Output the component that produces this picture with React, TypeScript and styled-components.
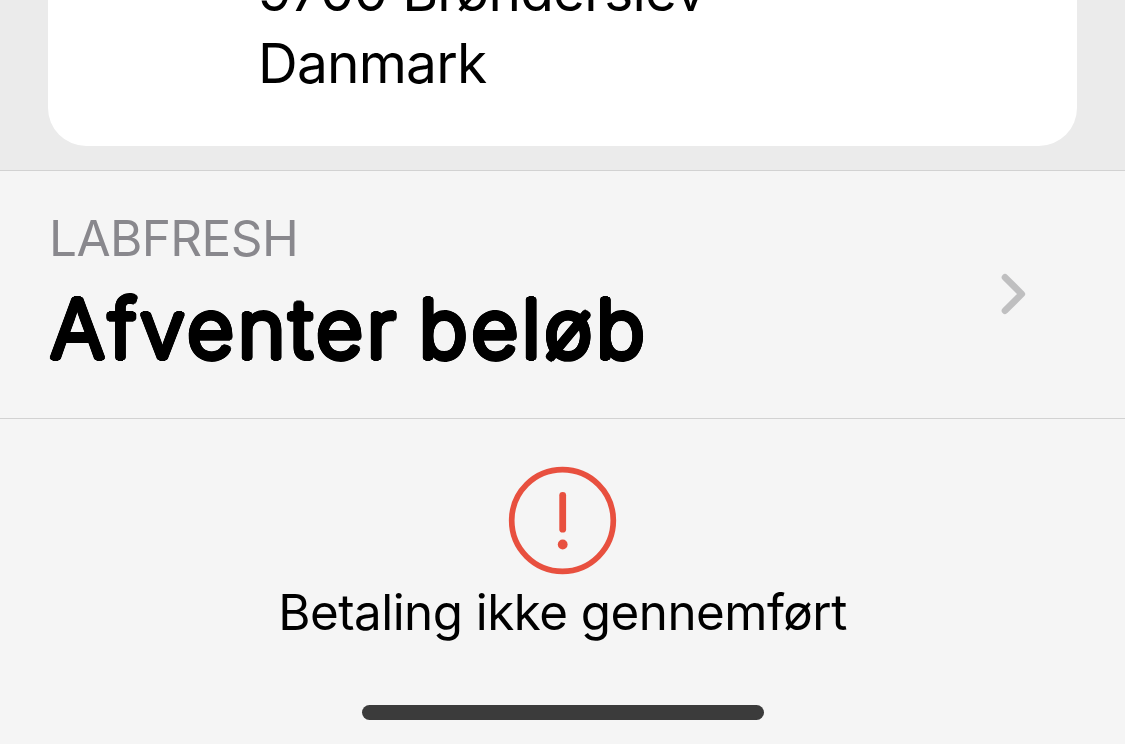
import React from 'react';
import styled, { createGlobalStyle } from 'styled-components';

const GlobalStyle = createGlobalStyle`
  * { box-sizing: border-box; }
  body { margin: 0; overflow: hidden; font-family: Inter, "Liberation Sans", sans-serif; color: #000; }
`;

const Screen = styled.main`
  width: 1125px;
  height: 744px;
  display: flex;
  flex-direction: column;
  overflow: hidden;
  background: #f5f5f5;
`;

const Backdrop = styled.div`
  flex: none;
  height: 170px;
  padding: 0 48px;
  background: #ebebeb;
`;

const AddressCard = styled.div`
  height: 146px;
  padding-left: 210px;
  display: flex;
  flex-direction: column;
  justify-content: flex-end;
  padding-bottom: 47px;
  overflow: hidden;
  border-radius: 0 0 38px 38px;
  background: #fff;
`;

const Line = styled.span<{ $size: number; $height: number; $tracking?: number; $weight?: number; $color?: string }>`
  flex: none;
  align-self: flex-start;
  white-space: nowrap;
  font-size: ${(p) => p.$size}px;
  line-height: ${(p) => p.$height}px;
  letter-spacing: ${(p) => p.$tracking ?? 0}px;
  font-weight: ${(p) => p.$weight ?? 400};
  color: ${(p) => p.$color ?? '#000'};
`;

// A ring of solid shadows thickens the strokes evenly, giving rounded terminals.
const roundedOutline = Array.from({ length: 16 }, (_, i) => {
  const angle = (i * Math.PI) / 8;
  return `${(2.6 * Math.cos(angle)).toFixed(2)}px ${(2.6 * Math.sin(angle)).toFixed(2)}px 0 #000`;
}).join(', ');

const RoundedTitle = styled(Line)`
  margin-left: 1px;
  word-spacing: -7px;
  text-shadow: ${roundedOutline};
`;

const PayeeRow = styled.section`
  flex: none;
  height: 249px;
  padding: 37px 98px 0 49px;
  display: flex;
  justify-content: space-between;
  border-top: 1px solid #d2d2d2;
  border-bottom: 1px solid #d2d2d2;
`;

const PayeeText = styled.div`
  display: flex;
  flex-direction: column;
`;

const Chevron = styled.svg`
  flex: none;
  width: 28px;
  height: 44px;
  margin-top: 64px;
`;

const Status = styled.section`
  flex: 1;
  display: flex;
  flex-direction: column;
  align-items: center;
  padding-top: 46px;
`;

const AlertIcon = styled.svg`
  flex: none;
  width: 111px;
  height: 110px;
`;

const StatusText = styled(Line)`
  align-self: center;
  margin-top: 7px;
`;

const HomeIndicator = styled.div`
  width: 402px;
  height: 15px;
  margin: auto 0 24px;
  border-radius: 8px;
  background: #3b3b3b;
`;

export default function App() {
  return (
    <>
      <GlobalStyle />
      <Screen>
        <Backdrop>
          <AddressCard>
            <Line $size={55} $height={72} $tracking={-0.8}>9700 Brønderslev</Line>
            <Line $size={55} $height={72} $tracking={-0.8}>Danmark</Line>
          </AddressCard>
        </Backdrop>
        <PayeeRow>
          <PayeeText>
            <Line $size={49.5} $height={60} $tracking={-0.6} $color="#89888d">LABFRESH</Line>
            <RoundedTitle $size={81.5} $height={122} $tracking={3.4} $weight={300}>Afventer beløb</RoundedTitle>
          </PayeeText>
          <Chevron viewBox="0 0 28 44" fill="none" stroke="#bfbfc0" strokeWidth="6.6" strokeLinecap="round" strokeLinejoin="round">
            <path d="M6 5.3 L22.8 22 L6 38.7" />
          </Chevron>
        </PayeeRow>
        <Status>
          <AlertIcon viewBox="0 0 111 110">
            <circle cx="55.5" cy="55.5" r="50.8" fill="none" stroke="#e8503f" strokeWidth="5.7" />
            <path d="M55.7 30.3V64.2" stroke="#e8503f" strokeWidth="6.8" strokeLinecap="round" />
            <circle cx="55.7" cy="79.5" r="4.9" fill="#e8503f" />
          </AlertIcon>
          <StatusText $size={49.3} $height={60} $tracking={-0.5}>Betaling ikke gennemført</StatusText>
          <HomeIndicator />
        </Status>
      </Screen>
    </>
  );
}
